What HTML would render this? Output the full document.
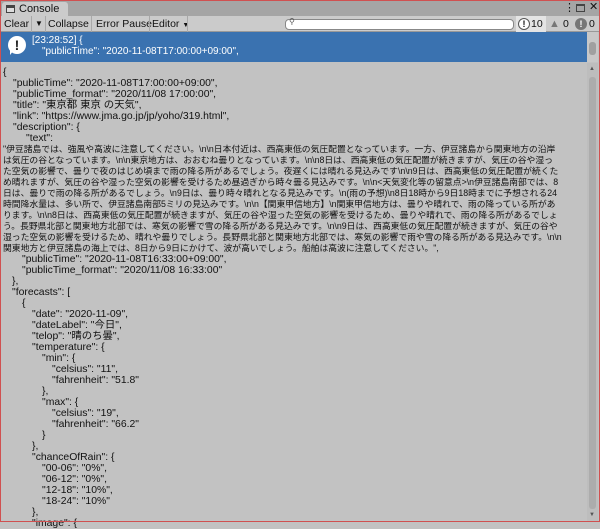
<!DOCTYPE html>
<html><head><meta charset="utf-8"><style>
*{margin:0;padding:0;box-sizing:border-box}
body{width:600px;height:522px;overflow:hidden;background:#c2c2c2;font-family:"Liberation Sans","Noto Sans CJK JP",sans-serif;position:relative;color:#111}
#frame{position:absolute;left:0;top:0;width:600px;height:522px;border:1px solid #d05050;pointer-events:none;z-index:10}
#tabbar{position:absolute;left:0;top:0;width:600px;height:16px;background:#a5a5a5}
#tab{position:absolute;left:2px;top:2px;width:66px;height:15px;background:#cbcbcb;border-radius:3px 3px 0 0;font-size:11px;line-height:14px;padding-left:17px}
#tab i{position:absolute;left:4px;top:3px;width:9px;height:8px;border:1px solid #444;background:linear-gradient(#444 0 2px,#ddd 2px)}
#tb{position:absolute;left:0;top:16px;width:600px;height:16px;background:#cbcbcb;border-bottom:1px solid #999;font-size:10.5px;line-height:16px}
#tb span{position:absolute;top:0}
.sep{position:absolute;top:0;width:1px;height:16px;background:#a8a8a8}
#search{position:absolute;left:285px;top:19px;width:229px;height:11px;background:#fff;border:1px solid #888;border-radius:4px}
#blue{position:absolute;left:0;top:32px;width:587px;height:30px;background:#3a72b0;color:#fff;font-size:10px}
#content{position:absolute;left:0;top:67px;width:587px;font-size:10.4px;line-height:11px}
#content div{white-space:nowrap;height:11px}
.jp{font-size:8.8px;padding-left:3px}
#sb{position:absolute;left:587px;top:63px;width:11px;height:458px;background:#bdbdbd}
#thumb{position:absolute;left:589px;top:77px;width:7px;height:432px;background:#acacac;border-radius:3px}
</style></head><body>
<div id="tabbar"><div id="tab"><i></i>Console</div>
<span style="position:absolute;left:564px;top:1px;font-size:11px">⋮</span>
<span style="position:absolute;left:576px;top:4px;width:9px;height:8px;border:1px solid #444;border-top-width:2px"></span>
<span style="position:absolute;left:589px;top:0px;font-size:11px">✕</span></div>
<div id="tb">
<span style="left:4px">Clear</span><div class="sep" style="left:31px"></div><span style="left:35px;font-size:8px">▼</span><div class="sep" style="left:45px"></div>
<span style="left:48px">Collapse</span><div class="sep" style="left:91px"></div>
<span style="left:96px">Error Pause</span><div class="sep" style="left:149px"></div>
<span style="left:152px">Editor <small style="font-size:7px">▼</small></span><div class="sep" style="left:187px"></div>
<div class="sep" style="left:516px;width:30px;background:#e4e4e4"></div>
<span style="left:518px;width:12px;height:12px;top:2px;border:1px solid #555;border-radius:50%;background:#fff;font-size:9px;line-height:10px;text-align:center;font-weight:bold">!</span><span style="left:531px">10</span>
<span style="left:549px;color:#777;font-size:11px">▲</span><span style="left:563px">0</span>
<span style="left:575px;top:2px;width:12px;height:12px;border-radius:50%;background:#777;color:#fff;font-size:9px;line-height:12px;text-align:center;font-weight:bold">!</span><span style="left:589px">0</span>
</div>
<div id="search"><span style="position:absolute;left:3px;top:-3px;font-size:8px;color:#555">⚲</span></div>
<div id="blue">
<div style="position:absolute;left:8px;top:4px;width:18px;height:18px;border-radius:50%;background:#fff;color:#222;font-weight:bold;font-size:14px;line-height:18px;text-align:center">!</div>
<div style="position:absolute;left:10px;top:18px;width:0;height:0;border-left:4px solid #fff;border-bottom:5px solid transparent"></div>
<div style="position:absolute;left:32px;top:3px">[23:28:52] {</div>
<div style="position:absolute;left:42px;top:14px">"publicTime": "2020-11-08T17:00:00+09:00",</div>
</div>
<div id="content">
<div style="padding-left:3px">{</div>
<div style="padding-left:13px">"publicTime": "2020-11-08T17:00:00+09:00",</div>
<div style="padding-left:13px">"publicTime_format": "2020/11/08 17:00:00",</div>
<div style="padding-left:13px">"title": "東京都 東京 の天気",</div>
<div style="padding-left:13px">"link": "https://www.jma.go.jp/jp/yoho/319.html",</div>
<div style="padding-left:13px">"description": {</div>
<div style="padding-left:26px">"text":</div>
<div class="jp">"伊豆諸島では、強風や高波に注意してください。\n\n日本付近は、西高東低の気圧配置となっています。一方、伊豆諸島から関東地方の沿岸</div>
<div class="jp">は気圧の谷となっています。\n\n東京地方は、おおむね曇りとなっています。\n\n8日は、西高東低の気圧配置が続きますが、気圧の谷や湿っ</div>
<div class="jp">た空気の影響で、曇りで夜のはじめ頃まで雨の降る所があるでしょう。夜遅くには晴れる見込みです\n\n9日は、西高東低の気圧配置が続くた</div>
<div class="jp">め晴れますが、気圧の谷や湿った空気の影響を受けるため昼過ぎから時々曇る見込みです。\n\n&lt;天気変化等の留意点&gt;\n伊豆諸島南部では、8</div>
<div class="jp">日は、曇りで雨の降る所があるでしょう。\n9日は、曇り時々晴れとなる見込みです。\n(雨の予想)\n8日18時から9日18時までに予想される24</div>
<div class="jp">時間降水量は、多い所で、伊豆諸島南部5ミリの見込みです。\n\n【関東甲信地方】\n関東甲信地方は、曇りや晴れで、雨の降っている所があ</div>
<div class="jp">ります。\n\n8日は、西高東低の気圧配置が続きますが、気圧の谷や湿った空気の影響を受けるため、曇りや晴れで、雨の降る所があるでしょ</div>
<div class="jp">う。長野県北部と関東地方北部では、寒気の影響で雪の降る所がある見込みです。\n\n9日は、西高東低の気圧配置が続きますが、気圧の谷や</div>
<div class="jp">湿った空気の影響を受けるため、晴れや曇りでしょう。長野県北部と関東地方北部では、寒気の影響で雨や雪の降る所がある見込みです。\n\n</div>
<div class="jp">関東地方と伊豆諸島の海上では、8日から9日にかけて、波が高いでしょう。船舶は高波に注意してください。",</div>
<div style="padding-left:22px">"publicTime": "2020-11-08T16:33:00+09:00",</div>
<div style="padding-left:22px">"publicTime_format": "2020/11/08 16:33:00"</div>
<div style="padding-left:12px">},</div>
<div style="padding-left:12px">"forecasts": [</div>
<div style="padding-left:22px">{</div>
<div style="padding-left:32px">"date": "2020-11-09",</div>
<div style="padding-left:32px">"dateLabel": "今日",</div>
<div style="padding-left:32px">"telop": "晴のち曇",</div>
<div style="padding-left:32px">"temperature": {</div>
<div style="padding-left:42px">"min": {</div>
<div style="padding-left:52px">"celsius": "11",</div>
<div style="padding-left:52px">"fahrenheit": "51.8"</div>
<div style="padding-left:42px">},</div>
<div style="padding-left:42px">"max": {</div>
<div style="padding-left:52px">"celsius": "19",</div>
<div style="padding-left:52px">"fahrenheit": "66.2"</div>
<div style="padding-left:42px">}</div>
<div style="padding-left:32px">},</div>
<div style="padding-left:32px">"chanceOfRain": {</div>
<div style="padding-left:42px">"00-06": "0%",</div>
<div style="padding-left:42px">"06-12": "0%",</div>
<div style="padding-left:42px">"12-18": "10%",</div>
<div style="padding-left:42px">"18-24": "10%"</div>
<div style="padding-left:32px">},</div>
<div style="padding-left:32px">"image": {</div>
</div>
<div style="position:absolute;left:587px;top:32px;width:11px;height:30px;background:#c8c8c8"></div>
<div style="position:absolute;left:589px;top:42px;width:7px;height:13px;background:#a0a0a0;border-radius:3px"></div>
<div id="sb"></div><div id="thumb"></div>
<div style="position:absolute;left:589px;top:66px;font-size:6px;color:#555">▲</div>
<div style="position:absolute;left:589px;top:512px;font-size:6px;color:#555">▼</div>
<div id="frame"></div>
</body></html>
